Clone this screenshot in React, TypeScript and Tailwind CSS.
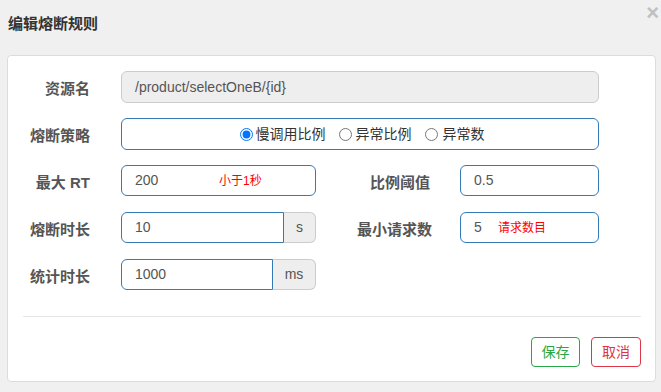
import React from "react"

const font = { fontFamily: '"Liberation Sans", "Noto Sans CJK SC", sans-serif' }

const Label: React.FC<{ w: string; children: React.ReactNode }> = ({ w, children }) => (
    <div className={`${w} shrink-0 text-right text-[15px] font-bold text-[#555] leading-[20px] pt-[4px]`}>{children}</div>
)

export default function App() {
    return (
        <div style={font} className="relative w-[661px] h-[392px] bg-[#f0f0f0] overflow-hidden">
            <div className="h-[55px] pl-[8px] pt-[14px]">
                <h4 className="text-[15px] font-bold leading-[20px] text-[#333]">编辑熔断规则</h4>
            </div>
            <button className="absolute top-[0px] right-[2px] text-[22px] font-bold leading-[26px] text-[#c0c0c0]">×</button>

            <div className="ml-[7px] w-[649px] h-[327px] bg-white border border-[#dcdcdc] rounded-[4px] pt-[15px]">
                <div className="flex flex-col gap-[15px]">
                    {/* 资源名 */}
                    <div className="flex items-center h-[32px]">
                        <Label w="w-[82px]">资源名</Label>
                        <div className="ml-[31px] w-[478px] h-[32px] flex items-center px-[13px] bg-[#eee] border border-[#ccc] rounded-[6px] text-[14px] text-[#555]">
                            /product/selectOneB/{'{id}'}
                        </div>
                    </div>

                    {/* 熔断策略 */}
                    <div className="flex items-center h-[32px]">
                        <Label w="w-[82px]">熔断策略</Label>
                        <div className="ml-[31px] w-[478px] h-[32px] flex items-center justify-center border border-[#337ab7] rounded-[6px] text-[14px] text-[#333] gap-[13px] pl-[4px]">
                            <label className="flex items-center gap-[3px]">
                                <input type="radio" name="grade" defaultChecked className="w-[13px] h-[13px] m-0" />
                                <span>慢调用比例</span>
                            </label>
                            <label className="flex items-center gap-[4px]">
                                <input type="radio" name="grade" className="w-[13px] h-[13px] m-0" />
                                <span>异常比例</span>
                            </label>
                            <label className="flex items-center gap-[5px]">
                                <input type="radio" name="grade" className="w-[13px] h-[13px] m-0" />
                                <span>异常数</span>
                            </label>
                        </div>
                    </div>

                    {/* 最大 RT / 比例阈值 */}
                    <div className="flex items-center h-[32px]">
                        <Label w="w-[82px]">最大 RT</Label>
                        <div className="self-start ml-[31px] w-[195px] h-[31px] flex items-center pl-[13px] border border-[#337ab7] rounded-[6px] text-[14px] text-[#555]">
                            <span className="w-[84px]">200</span>
                            <span className="text-[12px] text-[#f00]">小于1秒</span>
                        </div>
                        <Label w="w-[114px]">比例阈值</Label>
                        <div className="self-start ml-[30px] w-[139px] h-[31px] flex items-center pl-[13px] border border-[#337ab7] rounded-[6px] text-[14px] text-[#555]">
                            0.5
                        </div>
                    </div>

                    {/* 熔断时长 / 最小请求数 */}
                    <div className="flex items-center h-[32px]">
                        <Label w="w-[82px]">熔断时长</Label>
                        <div className="self-start ml-[31px] flex h-[31px]">
                            <div className="w-[163px] h-full flex items-center pl-[13px] border border-[#337ab7] rounded-l-[6px] text-[14px] text-[#555]">10</div>
                            <div className="w-[32px] h-full flex items-center justify-center bg-[#eee] border border-l-0 border-[#ccc] rounded-r-[6px] text-[14px] text-[#555]">s</div>
                        </div>
                        <Label w="w-[116px]">最小请求数</Label>
                        <div className="self-start ml-[28px] w-[139px] h-[31px] flex items-center pl-[13px] border border-[#337ab7] rounded-[6px] text-[14px] text-[#555]">
                            <span className="w-[24px]">5</span>
                            <span className="text-[12px] text-[#f00]">请求数目</span>
                        </div>
                    </div>

                    {/* 统计时长 */}
                    <div className="flex items-center h-[32px]">
                        <Label w="w-[82px]">统计时长</Label>
                        <div className="self-start ml-[31px] flex h-[31px]">
                            <div className="w-[152px] h-full flex items-center pl-[13px] border border-[#337ab7] rounded-l-[6px] text-[14px] text-[#555]">1000</div>
                            <div className="w-[43px] h-full flex items-center justify-center bg-[#eee] border border-l-0 border-[#ccc] rounded-r-[6px] text-[14px] text-[#555]">ms</div>
                        </div>
                    </div>
                </div>

                <div className="mt-[25px] ml-[15px] mr-[14px] border-t border-[#e5e5e5]" />

                <div className="mt-[20px] mr-[14px] flex justify-end gap-[11px]">
                    <button className="w-[49px] h-[30px] border border-[#28a745] rounded-[4px] text-[14px] text-[#28a745]">保存</button>
                    <button className="w-[50px] h-[30px] border border-[#dc3545] rounded-[4px] text-[14px] text-[#dc3545]">取消</button>
                </div>
            </div>
        </div>
    )
}
